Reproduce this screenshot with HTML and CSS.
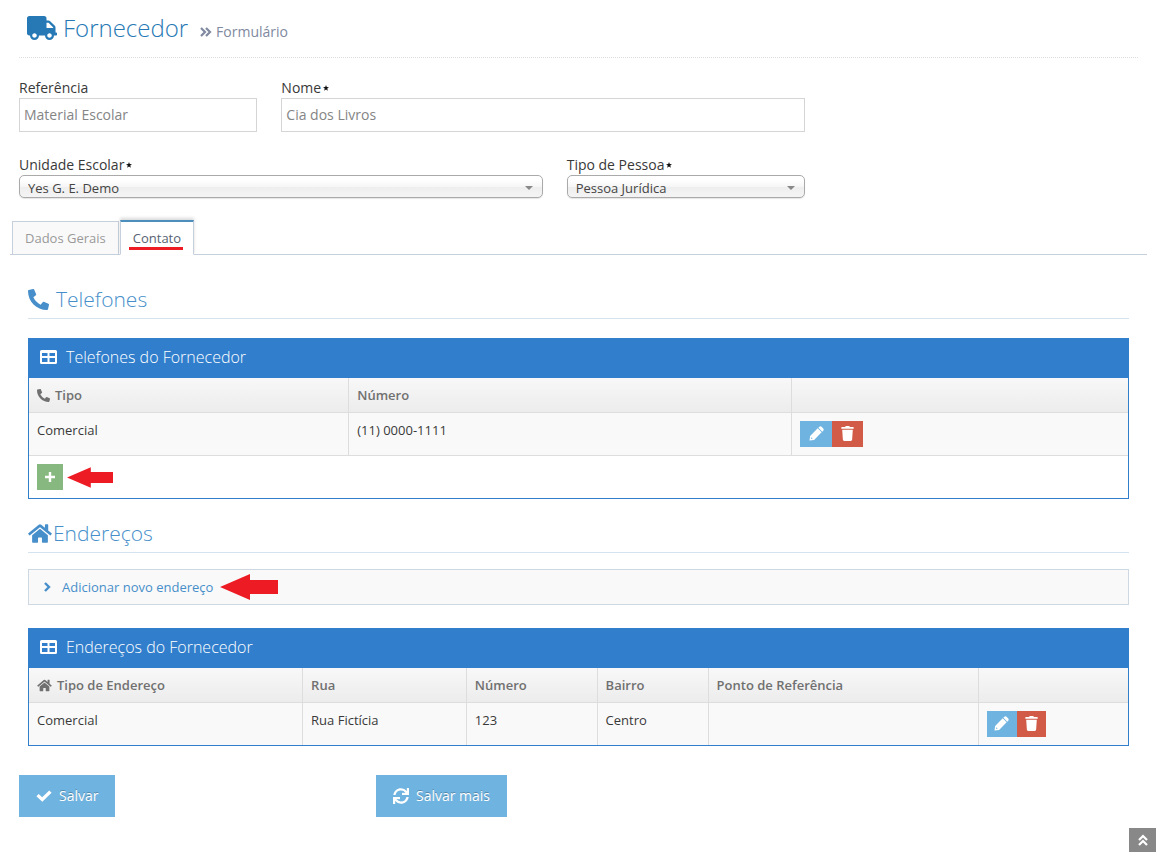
FILE: index.html
```html
<!DOCTYPE html>
<html lang="pt-BR">
<head>
<meta charset="utf-8">
<title>Fornecedor - Formulário</title>
<link rel="stylesheet" href="styles.css">
</head>
<body>
<svg class="sprite" aria-hidden="true">
  <symbol id="truck" viewBox="0 0 640 512"><path d="M624 352h-16V243.9c0-12.7-5.1-24.9-14.1-33.9L494 110.1c-9-9-21.2-14.1-33.9-14.1H416V48c0-26.5-21.5-48-48-48H48C21.5 0 0 21.5 0 48v320c0 26.5 21.5 48 48 48h16c0 53 43 96 96 96s96-43 96-96h128c0 53 43 96 96 96s96-43 96-96h48c8.800 0 16-7.200 16-16v-32c0-8.800-7.200-16-16-16zM160 464c-26.500 0-48-21.500-48-48s21.500-48 48-48 48 21.500 48 48-21.500 48-48 48zm320 0c-26.500 0-48-21.500-48-48s21.500-48 48-48 48 21.500 48 48-21.500 48-48 48zm80-208H416V144h44.100l99.900 99.900V256z"/></symbol>
  <symbol id="phone" viewBox="0 0 512 512"><path d="M497.390 361.800l-112-48a24 24 0 0 0-28 6.900l-49.600 60.600A370.660 370.660 0 0 1 130.600 204.110l60.600-49.600a23.940 23.940 0 0 0 6.900-28l-48-112A24.160 24.160 0 0 0 122.600.61l-104 24A24 24 0 0 0 0 48c0 256.500 207.900 464 464 464a24 24 0 0 0 23.400-18.600l24-104a24.290 24.290 0 0 0-14.010-27.600z"/></symbol>
  <symbol id="home" viewBox="0 0 576 512"><path d="M280.370 148.260L96 300.110V464a16 16 0 0 0 16 16l112.060-.29a16 16 0 0 0 15.920-16V368a16 16 0 0 1 16-16h64a16 16 0 0 1 16 16v95.640a16 16 0 0 0 16 16.050L464 480a16 16 0 0 0 16-16V300L295.670 148.260a12.190 12.190 0 0 0-15.300 0zM571.600 251.470L488 182.560V44.050a12 12 0 0 0-12-12h-56a12 12 0 0 0-12 12v72.610L318.470 43a48 48 0 0 0-61 0L4.340 251.470a12 12 0 0 0-1.600 16.900l25.500 31A12 12 0 0 0 45.150 301l235.220-193.740a12.190 12.190 0 0 1 15.300 0L530.900 301a12 12 0 0 0 16.900-1.600l25.500-31a12 12 0 0 0-1.700-16.930z"/></symbol>
  <symbol id="sync" viewBox="0 0 512 512"><path d="M440.650 12.570l4 82.770A247.160 247.160 0 0 0 255.830 8C134.730 8 33.910 94.920 12.290 209.820A12 12 0 0 0 24.090 224h49.050a12 12 0 0 0 11.670-9.260 175.910 175.910 0 0 1 317-56.940l-101.460-4.860a12 12 0 0 0-12.570 12v47.410a12 12 0 0 0 12 12H500a12 12 0 0 0 12-12V12a12 12 0 0 0-12-12h-47.370a12 12 0 0 0-11.980 12.570zM255.830 432a175.610 175.610 0 0 1-146-77.800l101.800 4.870a12 12 0 0 0 12.570-12v-47.400a12 12 0 0 0-12-12H12a12 12 0 0 0-12 12V500a12 12 0 0 0 12 12h47.350a12 12 0 0 0 12-12.600l-4.150-82.570A247.170 247.170 0 0 0 255.830 504c121.110 0 221.930-86.920 243.550-201.820a12 12 0 0 0-11.800-14.180h-49.050a12 12 0 0 0-11.670 9.260A175.860 175.860 0 0 1 255.830 432z"/></symbol>
  <symbol id="table" viewBox="0 0 17 14"><path fill-rule="evenodd" d="M1.500 0h14A1.500 1.500 0 0 1 17 1.500v11a1.500 1.500 0 0 1-1.500 1.500h-14A1.500 1.500 0 0 1 0 12.500v-11A1.500 1.500 0 0 1 1.500 0zM2 3v3h5.500V3zM9.500 3v3H15V3zM2 8v4h5.500V8zM9.500 8v4H15V8z"/></symbol>
  <symbol id="pencil" viewBox="0 0 16 16"><path fill-rule="evenodd" d="M1.200 10.600 9.300 2.500l4.200 4.200L5.400 14.800.5 15.500zM2.500 12l-.4 1.800 1.800-.4zM10 1.800l.8-.8a2 2 0 0 1 2.800 0L15 2.400a2 2 0 0 1 0 2.800l-.8.800z"/></symbol>
  <symbol id="trash" viewBox="0 0 14 16"><path d="M4.500 1 5 0h4l.5 1H13a.7.7 0 0 1 .7.700V3H.3V1.700A.7.700 0 0 1 1 1zM1.300 4h11.400l-.7 10.500A1.500 1.500 0 0 1 10.500 16h-7A1.500 1.500 0 0 1 2 14.500z"/></symbol>
  <symbol id="plus" viewBox="0 0 12 12"><path d="M4.800 1h2.400v3.800H11v2.400H7.200V11H4.800V7.200H1V4.800h3.800z"/></symbol>
  <symbol id="check" viewBox="0 0 16 12"><path d="M13.200.4 15.600 2.700 6.300 11.800.4 6.200 2.700 3.900l3.500 3.300z"/></symbol>
  <symbol id="double-angle" viewBox="0 0 12 10"><path fill="none" stroke="currentColor" stroke-width="2.200" d="m1 1 4 4-4 4m5-8 4 4-4 4"/></symbol>
  <symbol id="angle" viewBox="0 0 7 10"><path fill="none" stroke="currentColor" stroke-width="2.400" d="m1 1 4 4-4 4"/></symbol>
  <symbol id="star" viewBox="0 0 10 10"><path d="m5 0 1.300 3.400L10 3.600 7.100 6 8.100 9.700 5 7.600 1.900 9.700 2.900 6 0 3.600l3.700-.2z"/></symbol>
  <symbol id="arrow" viewBox="0 0 58 26"><path d="M0 13 30 0v6h28v14H30v6z"/></symbol>
</svg>

<main class="page">
  <header class="page-header">
    <svg class="icon icon-truck"><use href="#truck"/></svg>
    <h1 class="page-title">Fornecedor</h1>
    <small class="page-subtitle"><svg class="icon icon-raquo"><use href="#double-angle"/></svg>Formulário</small>
  </header>

  <form class="form">
    <div class="fields fields-first">
      <div class="field">
        <label for="referencia">Referência</label>
        <input class="text-input" id="referencia" type="text" value="Material Escolar">
      </div>
      <div class="field">
        <label for="nome">Nome<svg class="icon icon-required"><use href="#star"/></svg></label>
        <input class="text-input" id="nome" type="text" value="Cia dos Livros">
      </div>
    </div>
    <div class="fields fields-second">
      <div class="field">
        <label for="unidade">Unidade Escolar<svg class="icon icon-required"><use href="#star"/></svg></label>
        <div class="select-box"><select class="select" id="unidade"><option>Yes G. E. Demo</option></select></div>
      </div>
      <div class="field">
        <label for="pessoa">Tipo de Pessoa<svg class="icon icon-required"><use href="#star"/></svg></label>
        <div class="select-box"><select class="select" id="pessoa"><option>Pessoa Jurídica</option></select></div>
      </div>
    </div>

    <nav class="tabs">
      <a class="tab" href="#dados">Dados Gerais</a>
      <a class="tab tab-active" href="#contato"><span class="tab-mark">Contato</span></a>
    </nav>

    <div class="tab-content" id="contato">
      <h2 class="section-title"><svg class="icon icon-phone-lg"><use href="#phone"/></svg>Telefones</h2>
      <section class="panel">
        <h3 class="panel-title"><svg class="icon icon-table"><use href="#table"/></svg>Telefones do Fornecedor</h3>
        <table class="grid">
          <colgroup><col class="phone-type"><col class="phone-number"><col></colgroup>
          <thead>
            <tr><th><svg class="icon icon-phone"><use href="#phone"/></svg>Tipo</th><th>Número</th><th></th></tr>
          </thead>
          <tbody>
            <tr>
              <td>Comercial</td><td>(11) 0000-1111</td>
              <td><div class="actions"><button class="action edit" type="button" aria-label="Editar"><svg class="icon icon-pencil"><use href="#pencil"/></svg></button><button class="action delete" type="button" aria-label="Excluir"><svg class="icon icon-trash"><use href="#trash"/></svg></button></div></td>
            </tr>
          </tbody>
          <tfoot>
            <tr><td colspan="3"><div class="add-row"><button class="add" type="button" aria-label="Adicionar"><svg class="icon icon-plus"><use href="#plus"/></svg></button><svg class="icon arrow-small"><use href="#arrow"/></svg></div></td></tr>
          </tfoot>
        </table>
      </section>

      <h2 class="section-title section-address"><svg class="icon icon-home-lg"><use href="#home"/></svg>Endereços</h2>
      <div class="accordion">
        <a class="accordion-link" href="#novo"><svg class="icon icon-angle"><use href="#angle"/></svg>Adicionar novo endereço</a>
        <svg class="icon arrow-large"><use href="#arrow"/></svg>
      </div>
      <section class="panel">
        <h3 class="panel-title"><svg class="icon icon-table"><use href="#table"/></svg>Endereços do Fornecedor</h3>
        <table class="grid">
          <colgroup><col class="addr-type"><col class="addr-street"><col class="addr-number"><col class="addr-district"><col class="addr-ref"><col></colgroup>
          <thead>
            <tr><th><svg class="icon icon-home"><use href="#home"/></svg>Tipo de Endereço</th><th>Rua</th><th>Número</th><th>Bairro</th><th>Ponto de Referência</th><th></th></tr>
          </thead>
          <tbody>
            <tr>
              <td>Comercial</td><td>Rua Fictícia</td><td>123</td><td>Centro</td><td></td>
              <td><div class="actions actions-narrow"><button class="action edit" type="button" aria-label="Editar"><svg class="icon icon-pencil"><use href="#pencil"/></svg></button><button class="action delete" type="button" aria-label="Excluir"><svg class="icon icon-trash"><use href="#trash"/></svg></button></div></td>
            </tr>
          </tbody>
        </table>
      </section>
    </div>

    <div class="form-actions">
      <div><button class="button" type="submit"><svg class="icon icon-check"><use href="#check"/></svg>Salvar</button></div>
      <div><button class="button" type="submit"><svg class="icon icon-sync"><use href="#sync"/></svg>Salvar mais</button></div>
    </div>
  </form>
</main>
<a class="scroll-up" href="#" aria-label="Voltar ao topo"><svg class="icon icon-up"><use href="#double-angle"/></svg></a>
</body>
</html>
```
FILE: styles.css
```css
* { box-sizing: border-box; }

body {
  margin: 0;
  background: #fff;
  color: #393939;
  font: 13px/20px "Open Sans", sans-serif;
}

button, input, select { font-family: inherit; }
a { text-decoration: none; }
.sprite { display: none; }
.icon { display: block; flex: none; fill: currentColor; }

.page { padding: 8px 18px 0 19px; }

/* Page header */
.page-header {
  display: flex;
  align-items: baseline;
  height: 50px;
  padding-left: 8px;
  border-bottom: 1px dotted #ddd;
}
.icon-truck { width: 30px; height: 24px; margin-right: 6px; color: #2679b5; align-self: flex-start; margin-top: 8px; }
.page-title { margin: 0; color: #2679b5; font-size: 24px; font-weight: 300; line-height: 40px; }
.page-subtitle { display: flex; align-items: center; margin-left: 12px; color: #8089a0; font-size: 14px; }
.icon-raquo { width: 12px; height: 10px; margin-right: 4px; }

/* Fields */
.fields { display: grid; column-gap: 24px; }
.fields-first { grid-template-columns: 21.3% 46.8%; margin-top: 20px; }
.fields-second { grid-template-columns: 46.8% 21.3%; margin-top: 23px; }
.field label { display: flex; align-items: center; font-size: 14px; line-height: 20px; }
.icon-required { width: 6px; height: 6px; margin-left: 2px; color: #111; }
.text-input {
  display: block;
  width: 100%;
  height: 34px;
  padding: 0 4px 2px;
  border: 1px solid #d5d5d5;
  color: #858585;
  font-size: 14px;
}
.select-box { position: relative; }
.select-box::after {
  content: "";
  position: absolute;
  top: 11px;
  right: 10px;
  border: 4px solid transparent;
  border-top-color: #888;
  border-bottom: 0;
  pointer-events: none;
}
.select {
  display: block;
  width: 100%;
  height: 23px;
  padding: 2px 24px 0 8px;
  appearance: none;
  border: 1px solid #aaa;
  border-radius: 5px;
  background: linear-gradient(#fff 20%, #f6f6f6 50%, #eee 52%, #f4f4f4 100%);
  box-shadow: 0 1px 1px rgba(0, 0, 0, .1);
  color: #444;
  font-size: 13px;
}

/* Tabs */
.tabs {
  display: flex;
  align-items: flex-end;
  gap: 1px;
  height: 35px;
  margin: 22px -9px 0;
  padding-left: 2px;
  border-bottom: 1px solid #c5d0dc;
}
.tab {
  height: 34px;
  margin-bottom: -1px;
  padding: 6px 12px 0;
  border: 1px solid #c5d0dc;
  background: #f9f9f9;
  color: #999;
}
.tab-active {
  height: 35px;
  border-top: 2px solid #4c8fbd;
  border-bottom-color: #fff;
  background: #fff;
  box-shadow: 0 -2px 3px rgba(0, 0, 0, .15);
  color: #576373;
  padding: 7px 10px 0 8px;
}
.tab-mark { display: block; height: 21px; padding: 0 2px 0 4px; border-bottom: 3px solid #ed1c24; line-height: 18px; }

/* Sections */
.tab-content { padding: 29px 9px 0; }
.section-title {
  display: flex;
  align-items: center;
  margin: 0 0 19px;
  padding-bottom: 3px;
  border-bottom: 1px solid #d5e3ef;
  color: #478fca;
  font-size: 21px;
  font-weight: 300;
  line-height: 31px;
}
.section-address { margin: 19px 0 16px; }
.icon-phone-lg { width: 21px; height: 21px; margin-right: 7px; }
.icon-home-lg { width: 24px; height: 21px; margin-right: 1px; }

/* Panels and tables */
.panel { border: 1px solid #307ecc; border-top: 0; }
.panel-title {
  display: flex;
  align-items: center;
  margin: 0 -1px;
  padding: 0 0 2px 12px;
  background: #307ecc;
  color: #fff;
  font-size: 16px;
  font-weight: 300;
  line-height: 38px;
}
.icon-table { width: 17px; height: 14px; margin-right: 9px; }
.grid { width: 100%; border-collapse: separate; border-spacing: 0; table-layout: fixed; }
.grid th, .grid td { padding: 7px 8px; border-left: 1px solid #ddd; text-align: left; vertical-align: top; }
.grid th:first-child, .grid td:first-child { border-left: 0; }
.grid th {
  height: 35px;
  border-bottom: 1px solid #ddd;
  background: linear-gradient(#f8f8f8, #ececec);
  color: #707070;
  font-weight: 600;
}
.grid th .icon { display: inline-block; margin-right: 5px; vertical-align: -2px; }
.grid tbody td { height: 42px; background: #f9f9f9; }
.grid tfoot td { border-top: 1px solid #ddd; }
.phone-type { width: 29.05%; }
.phone-number { width: 40.3%; }
.addr-type { width: 24.85%; }
.addr-street { width: 14.9%; }
.addr-number { width: 11.9%; }
.addr-district { width: 10.1%; }
.addr-ref { width: 24.6%; }
.icon-phone { width: 13px; height: 13px; }
.icon-home { width: 15px; height: 13px; }
.actions { display: flex; padding-top: 1px; }
.action, .add {
  display: flex;
  justify-content: center;
  width: 31px;
  height: 26px;
  padding: 5px 0 0;
  border: 0;
  color: #fff;
}
.edit { width: 32px; background: #6fb3e0; }
.delete { background: #d15b47; }
.actions-narrow .edit { width: 30px; }
.actions-narrow .delete { width: 29px; }
.icon-pencil { width: 15px; height: 15px; }
.icon-trash { width: 13px; height: 15px; }
.add-row { display: flex; align-items: center; gap: 4px; padding: 1px 0; }
.add { width: 26px; padding: 7px 0 0; background: #87b87f; }
.icon-plus { width: 12px; height: 12px; }
.arrow-small { width: 46px; height: 21px; color: #ed1c24; }
.arrow-large { width: 58px; height: 26px; color: #ed1c24; }

.accordion {
  display: flex;
  align-items: center;
  gap: 7px;
  height: 36px;
  margin-bottom: 23px;
  padding-left: 15px;
  border: 1px solid #cdd8e3;
  background: #f9f9f9;
}
.accordion-link { display: flex; align-items: center; color: #478fca; }
.icon-angle { width: 7px; height: 10px; margin-right: 11px; }

/* Form buttons */
.form-actions { display: grid; grid-template-columns: 31.9% 1fr; margin-top: 29px; }
.button {
  display: flex;
  align-items: center;
  height: 42px;
  padding: 0 17px 1px;
  border: 0;
  background: #6fb3e0;
  color: #fff;
  font-size: 14px;
  text-shadow: 0 -1px 0 rgba(0, 0, 0, .25);
}
.icon-check { width: 16px; height: 12px; margin-right: 7px; }
.icon-sync { width: 16px; height: 16px; margin-right: 7px; }

.scroll-up {
  position: fixed;
  right: 0;
  bottom: 0;
  display: flex;
  align-items: center;
  justify-content: center;
  width: 27px;
  height: 24px;
  background: #888;
  color: #fff;
}
.icon-up { width: 12px; height: 10px; transform: rotate(-90deg); }
```
